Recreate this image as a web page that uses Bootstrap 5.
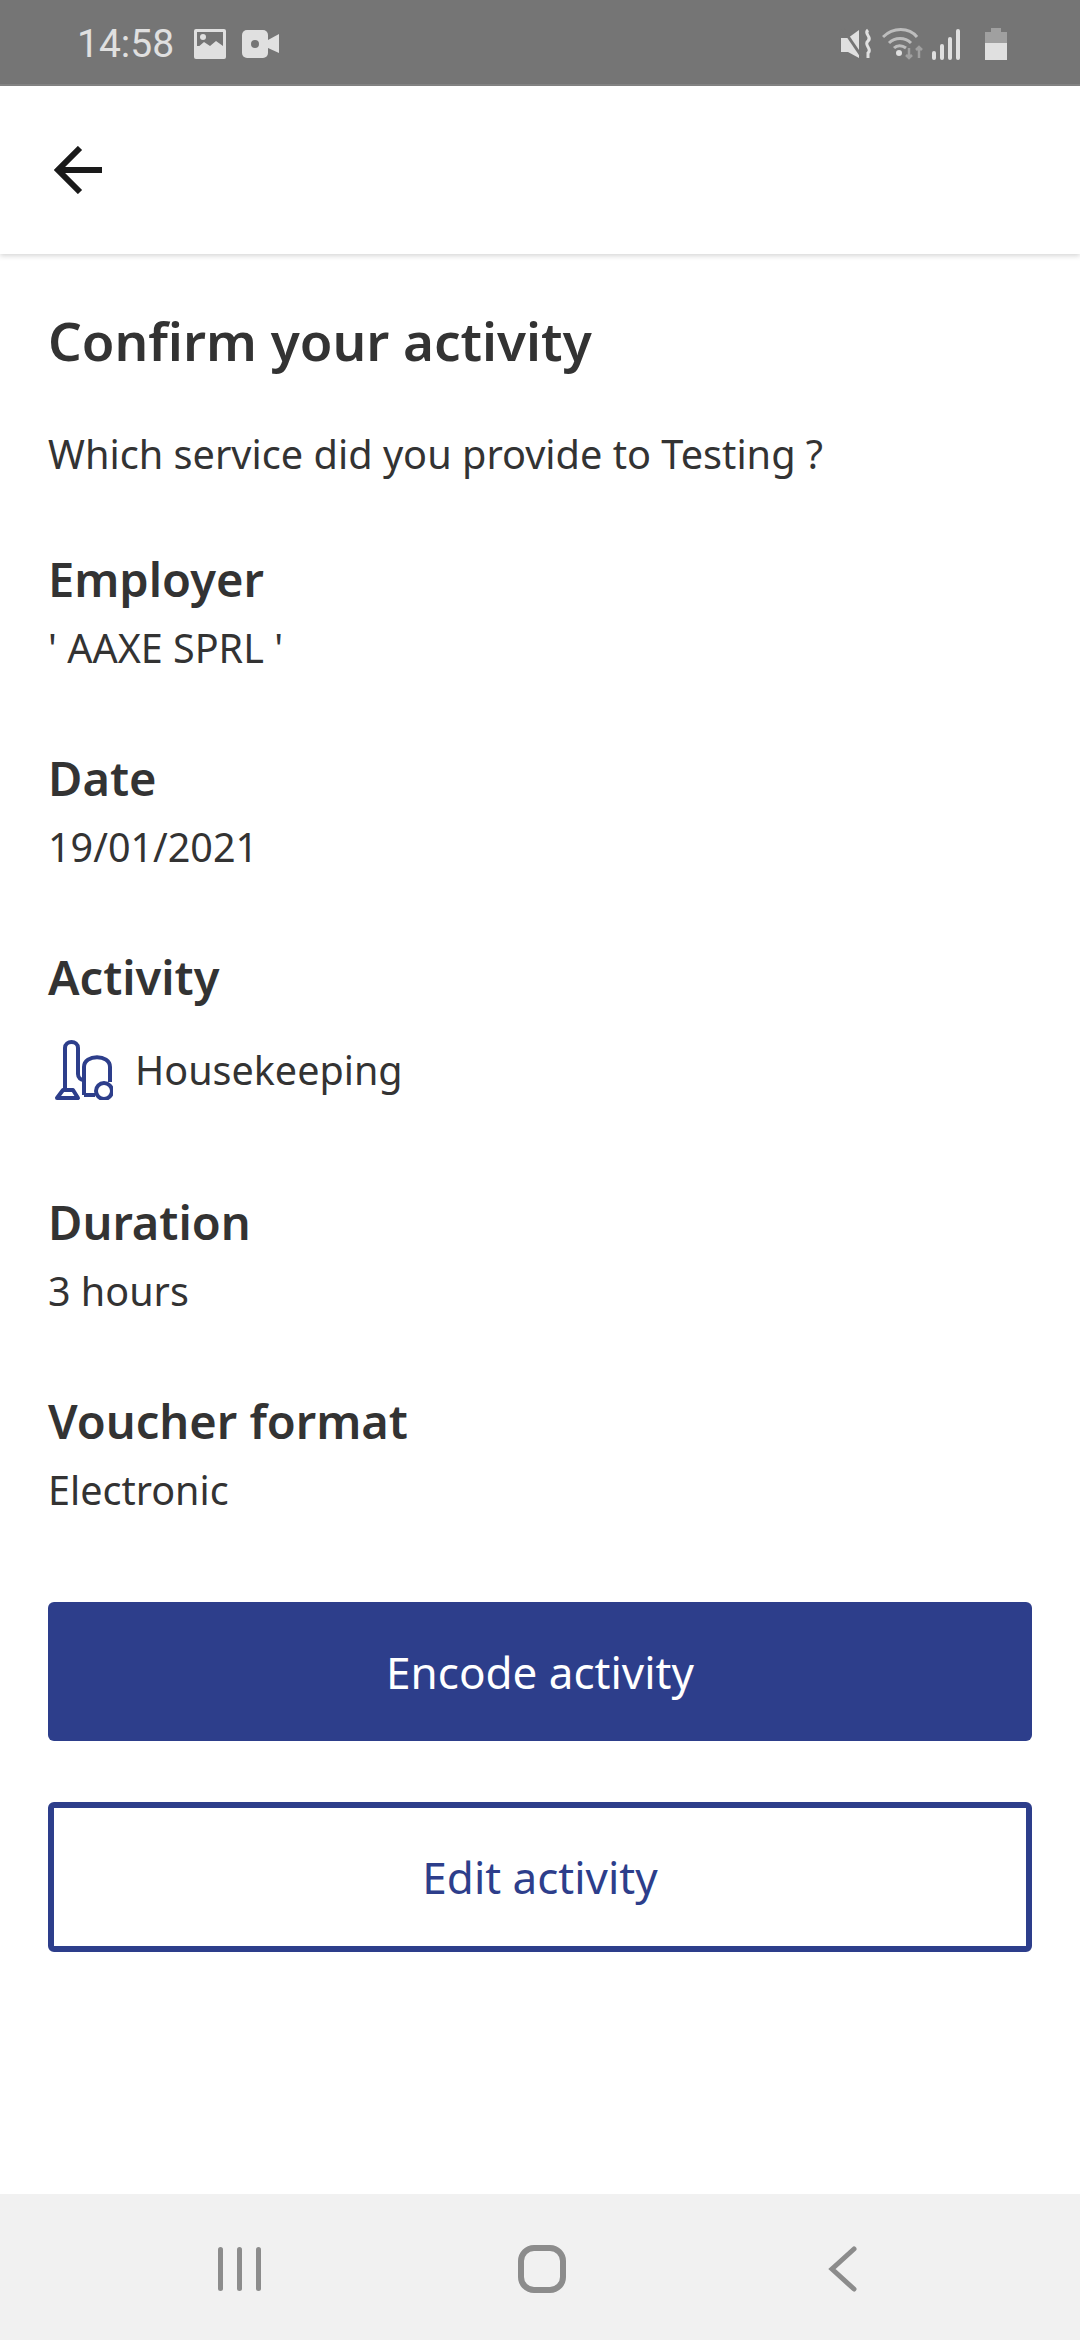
<!DOCTYPE html>
<html lang="en">
<head>
  <meta charset="UTF-8" />
  <meta name="viewport" content="width=device-width, initial-scale=1.0"/>
  <title>Confirm your activity</title>
  <link rel="stylesheet" href="https://cdn.jsdelivr.net/npm/bootstrap@5.3.0/dist/css/bootstrap.min.css"/>
  <style>
    body {
      font-family: "Noto Sans", "Open Sans", sans-serif;
      color: #333;
      height: 2340px;
      overflow: hidden;
    }
    .phone-status { height: 86px; background: #757575; padding: 4px 73px 0 77px; color: #e0e0e0; border-bottom: 2px solid #858585; }
    .phone-time { font-family: Roboto, sans-serif; font-size: 39px; line-height: 1; margin-right: 20px; }
    .app-header { height: 168px; padding-left: 54px; box-shadow: 0 2px 5px rgba(0,0,0,.16); position: relative; }
    .page-body { padding: 0 48px; }
    .page-title { font-size: 53px; font-weight: 600; line-height: 70px; margin: 52px 0 50px; }
    .page-lead { font-size: 39.7px; line-height: 56px; margin-bottom: 67px; }
    .info-label { font-size: 47px; font-weight: 600; line-height: 60px; margin: 0; }
    .info-value { font-size: 39.5px; line-height: 56px; margin: 11px 0 0; }
    .info-block { margin-bottom: 72px; }
    .info-block.activity-block { margin-bottom: 92px; }
    .info-block.last-block { margin-bottom: 84px; }
    .activity-row { margin-top: 33px; padding-left: 7px; }
    .activity-icon { margin-right: 22px; }
    .btn-encode, .btn-edit { width: 100%; font-size: 44px; border-radius: 6px; display: block; }
    .btn-encode { height: 139px; background: #2d3e8b; color: #fff; border: 0; margin-bottom: 61px; }
    .btn-encode:hover { background: #2d3e8b; color: #fff; }
    .btn-edit { height: 150px; background: #fff; color: #2d3e8b; border: 6px solid #2d3e8b; }
    .phone-nav { height: 146px; background: #f1f1f1; padding: 4px 0 0 218px; }
    .nav-recents { margin-right: 256px; }
    .nav-home { margin-right: 262px; }
  </style>
</head>
<body class="d-flex flex-column">
  <div class="phone-status d-flex align-items-center justify-content-between">
    <div class="d-flex align-items-center">
      <span class="phone-time">14:58</span>
      <svg width="32" height="30" viewBox="0 0 32 30" class="me-3"><rect width="32" height="30" rx="2" fill="#e0e0e0"/><rect x="3" y="3" width="26" height="14" fill="#757575"/><path d="M3 19l7-6 6 4 6-5 7 5v4H3z" fill="#e0e0e0"/><circle cx="9" cy="8" r="3" fill="#e0e0e0"/></svg>
      <svg width="37" height="28" viewBox="0 0 37 28"><rect width="26" height="28" rx="5" fill="#e0e0e0"/><circle cx="13" cy="14" r="4" fill="#757575"/><path d="M26 10l11-6v19l-11-5z" fill="#e0e0e0"/></svg>
    </div>
    <div class="d-flex align-items-center">
      <svg width="34" height="32" viewBox="0 0 34 32" class="me-2"><path d="M1 10h7l11-8v28l-11-6H1z" fill="#e0e0e0"/><path d="M3 1l19 28" stroke="#757575" stroke-width="3"/><path d="M28 2c-5 4 5 7 0 11s5 8 0 12v5" fill="none" stroke="#e0e0e0" stroke-width="3"/></svg>
      <svg width="42" height="32" viewBox="0 0 42 32" class="me-2"><path d="M1 9c10-10 26-10 34 0M7 15c6-6 16-6 22 0M12 20c3-3 8-3 12 0" fill="none" stroke="#bdbdbd" stroke-width="3"/><circle cx="17" cy="25" r="3" fill="#e0e0e0"/><path d="M37 30V19m-3 3l3-3 3 3M27 20v10m-3-3l3 3 3-3" fill="none" stroke="#a0a0a0" stroke-width="2.5"/></svg>
      <svg width="29" height="32" viewBox="0 0 29 32" class="me-4"><rect x="0" y="23" width="4" height="9" rx="2" fill="#e0e0e0"/><rect x="8" y="16" width="4" height="16" rx="2" fill="#e0e0e0"/><rect x="16" y="9" width="4" height="23" rx="2" fill="#e0e0e0"/><rect x="24" y="1" width="4" height="31" rx="2" fill="#e0e0e0"/></svg>
      <svg width="22" height="32" viewBox="0 0 22 32"><path d="M6 4V0h10v4h6v11H0V4z" fill="#a0a0a0"/><path d="M0 15h22v17H0z" fill="#e0e0e0"/></svg>
    </div>
  </div>

  <div class="app-header d-flex align-items-center">
    <svg width="48" height="48" viewBox="0 0 48 48" fill="none" stroke="#1a1a1a" stroke-width="6"><path d="M26 2L4 24l22 22M4 24h44"/></svg>
  </div>

  <main class="page-body flex-grow-1">
    <h1 class="page-title">Confirm your activity</h1>
    <p class="page-lead">Which service did you provide to Testing ?</p>

    <div class="info-block">
      <h2 class="info-label">Employer</h2>
      <p class="info-value">' AAXE SPRL '</p>
    </div>
    <div class="info-block">
      <h2 class="info-label">Date</h2>
      <p class="info-value">19/01/2021</p>
    </div>
    <div class="info-block activity-block">
      <h2 class="info-label">Activity</h2>
      <div class="info-value activity-row d-flex align-items-center">
        <svg width="58" height="60" viewBox="0 0 58 60" fill="none" stroke="#2d3e8b" stroke-width="4" stroke-linejoin="round" class="activity-icon">
          <path d="M2 58l6-8h10l5 8z"/>
          <path d="M10 50V8c0-8 13-8 13 0v26c0 4 3 6 6 6"/>
          <path d="M29 55V27c0-13 26-13 26 0v15"/>
          <path d="M29 55h11"/>
          <circle cx="49" cy="51" r="8"/>
        </svg>
        <span>Housekeeping</span>
      </div>
    </div>
    <div class="info-block">
      <h2 class="info-label">Duration</h2>
      <p class="info-value">3 hours</p>
    </div>
    <div class="info-block last-block">
      <h2 class="info-label">Voucher format</h2>
      <p class="info-value">Electronic</p>
    </div>

    <button class="btn btn-encode">Encode activity</button>
    <button class="btn btn-edit">Edit activity</button>
  </main>

  <div class="phone-nav d-flex align-items-center">
    <svg width="44" height="46" viewBox="0 0 44 46" fill="#8c8c8c" class="nav-recents"><rect x="0" y="1" width="5" height="44" rx="2.5"/><rect x="19" y="1" width="5" height="44" rx="2.5"/><rect x="38" y="1" width="5" height="44" rx="2.5"/></svg>
    <svg width="48" height="48" viewBox="0 0 48 48" fill="none" stroke="#8c8c8c" stroke-width="6" class="nav-home"><rect x="3" y="3" width="42" height="42" rx="13"/></svg>
    <svg width="30" height="46" viewBox="0 0 30 46" fill="none" stroke="#8c8c8c" stroke-width="5" stroke-linecap="round"><path d="M26 3L4 23l22 20"/></svg>
  </div>
</body>
</html>
